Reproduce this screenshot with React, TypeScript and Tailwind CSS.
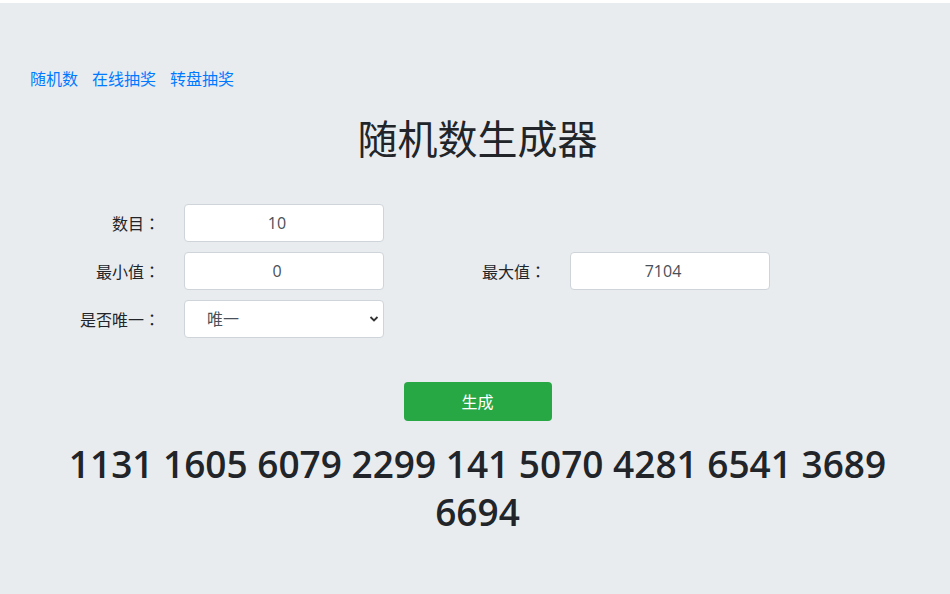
import { useState } from "react";

const font = { fontFamily: '"Open Sans", "Noto Sans CJK SC", sans-serif' };

const links = ["随机数", "在线抽奖", "转盘抽奖"];

// full-width colon, centred in its cell like the reference's font draws it
const Colon = () => <span className="font-['Noto_Sans_CJK_JP',sans-serif]">：</span>;

const App = () => {
  const [count, setCount] = useState("10");
  const [min, setMin] = useState("0");
  const [max, setMax] = useState("7104");
  const [unique, setUnique] = useState("唯一");
  const [result] = useState([1131, 1605, 6079, 2299, 141, 5070, 4281, 6541, 3689, 6694]);

  const inputCls =
    "h-[38px] w-[200px] rounded-[4px] border border-[#ced4da] bg-white pl-3 pr-[26px] text-center text-base text-[#495057] outline-none";

  return (
    <div className="min-h-[594px] w-full bg-white pt-[3px] text-[#212529]" style={font}>
      <div className="min-h-[591px] bg-[#e9ecef] pl-[30px] pr-[25px] pt-[64px] pb-[40px]">
        <nav className="flex gap-[14px] text-base leading-6">
          {links.map((l) => (
            <a key={l} href="#" className="text-[#007bff]">
              {l}
            </a>
          ))}
        </nav>

        <h1 className="mt-[24px] text-center text-[40px] font-normal leading-[48px]">随机数生成器</h1>

        <div className="mt-[41px] flex flex-col gap-[10px]">
          <div className="flex items-center">
            <label className="w-[130px] text-right text-base">
              数目<Colon />
            </label>
            <input className={`ml-[24px] ${inputCls}`} value={count} onChange={(e) => setCount(e.target.value)} />
          </div>
          <div className="flex items-center">
            <label className="w-[130px] text-right text-base">
              最小值<Colon />
            </label>
            <input className={`ml-[24px] ${inputCls}`} value={min} onChange={(e) => setMin(e.target.value)} />
            <label className="w-[162px] text-right text-base">
              最大值<Colon />
            </label>
            <input className={`ml-[24px] ${inputCls}`} value={max} onChange={(e) => setMax(e.target.value)} />
          </div>
          <div className="flex items-center">
            <label className="w-[130px] text-right text-base">
              是否唯一<Colon />
            </label>
            <div className="relative ml-[24px]">
              <select
                className="h-[38px] w-[200px] appearance-none rounded-[4px] border border-[#ced4da] bg-white pl-[22px] text-base text-[#495057] outline-none"
                value={unique}
                onChange={(e) => setUnique(e.target.value)}
              >
                <option>唯一</option>
                <option>可重复</option>
              </select>
              <svg
                className="pointer-events-none absolute right-[5px] top-[15px]"
                width="10"
                height="8"
                viewBox="0 0 10 8"
                fill="none"
              >
                <path d="M1.5 2 L5 5.5 L8.5 2" stroke="#333" strokeWidth="1.8" />
              </svg>
            </div>
          </div>
        </div>

        <div className="mt-[44px] flex justify-center">
          <button className="h-[39px] w-[148px] rounded-[4px] bg-[#28a745] text-base text-white">生成</button>
        </div>

        <div className="mx-auto mt-[19px] text-center text-[37px] font-semibold leading-[48px]">
          {result.join(" ")}
        </div>
      </div>
    </div>
  );
};

export default App;
